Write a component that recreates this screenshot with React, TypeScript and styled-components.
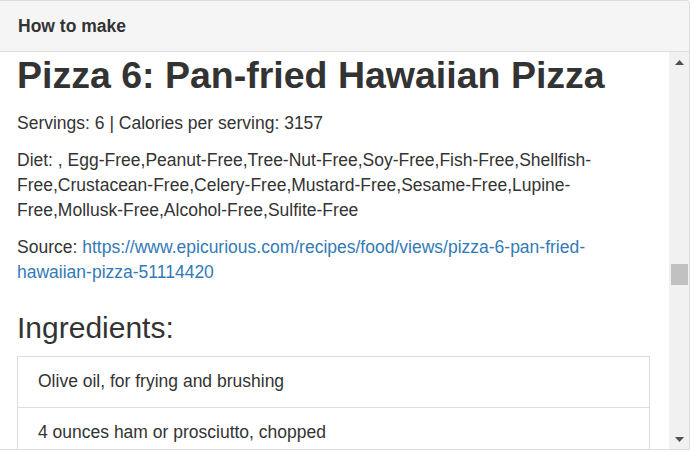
import React from "react";
import styled, { createGlobalStyle } from "styled-components";

const GlobalStyle = createGlobalStyle`
  html, body {
    margin: 0;
    padding: 0;
    background: #ffffff;
  }
  body {
    font-family: "Liberation Sans", Arial, Helvetica, sans-serif;
    color: #333333;
  }
  * { box-sizing: border-box; }
`;

const Panel = styled.section`
  width: 690px;
  height: 450px;
  display: flex;
  flex-direction: column;
  border: 1px solid #dddddd;
  border-left: 0;
  border-top-right-radius: 4px;
  background: #ffffff;
  overflow: hidden;
`;

const PanelHeading = styled.header`
  flex: 0 0 auto;
  height: 51px;
  padding: 0 18px;
  display: flex;
  align-items: center;
  background: #f5f5f5;
  border-bottom: 1px solid #dddddd;
  font-size: 17.5px;
  font-weight: bold;
  color: #333333;
`;

const BodyRow = styled.div`
  flex: 1 1 auto;
  min-height: 0;
  display: flex;
`;

const Content = styled.div`
  flex: 1 1 auto;
  min-width: 0;
  overflow: hidden;
  padding: 3px 19px 0 17px;
`;

const ScrollRail = styled.div`
  flex: 0 0 20px;
  display: flex;
  flex-direction: column;
  background: #f1f1f1;
`;

const ArrowButton = styled.div`
  flex: 0 0 20px;
  display: flex;
  align-items: center;
  justify-content: center;
`;

const Track = styled.div`
  flex: 1 1 auto;
  display: flex;
  flex-direction: column;
`;

const Thumb = styled.div`
  height: 21px;
  margin: 0 1px 0 2px;
  background: #c1c1c1;
`;

const Title = styled.h1`
  margin: 0 0 15px;
  font-size: 37.5px;
  line-height: 1.1;
  font-weight: bold;
  color: #333333;
`;

const Para = styled.p`
  margin: 0 0 12px;
  font-size: 17.5px;
  line-height: 25px;
`;

const Link = styled.a`
  color: #337ab7;
  text-decoration: none;
`;

const SectionTitle = styled.h2`
  margin: 26px 0 12px;
  font-size: 30px;
  line-height: 1.1;
  font-weight: normal;
  color: #333333;
`;

const ListGroup = styled.ul`
  list-style: none;
  margin: 0;
  padding: 0;
`;

const ListItem = styled.li`
  border: 1px solid #dddddd;
  margin-bottom: -1px;
  padding: 12px 20px 13px;
  font-size: 17.5px;
  line-height: 25px;
`;

const ingredients = [
  "Olive oil, for frying and brushing",
  "4 ounces ham or prosciutto, chopped",
];

const diet =
  ", Egg-Free,Peanut-Free,Tree-Nut-Free,Soy-Free,Fish-Free,Shellfish-Free,Crustacean-Free,Celery-Free,Mustard-Free,Sesame-Free,Lupine-Free,Mollusk-Free,Alcohol-Free,Sulfite-Free";

const sourceUrl =
  "https://www.epicurious.com/recipes/food/views/pizza-6-pan-fried-hawaiian-pizza-51114420";

const TRACK_LENGTH = 356;
const THUMB_LENGTH = 21;
const scrollFraction = 0.573;

function UpArrow() {
  return (
    <svg width="9" height="5" viewBox="0 0 9 5" aria-hidden="true">
      <polygon points="4.5,0 9,5 0,5" fill="#505050" />
    </svg>
  );
}

function DownArrow() {
  return (
    <svg width="9" height="5" viewBox="0 0 9 5" aria-hidden="true">
      <polygon points="0,0 9,0 4.5,5" fill="#505050" />
    </svg>
  );
}

export default function App() {
  const thumbOffset = Math.round(scrollFraction * (TRACK_LENGTH - THUMB_LENGTH));

  return (
    <>
      <GlobalStyle />
      <Panel>
        <PanelHeading>How to make</PanelHeading>
        <BodyRow>
          <Content>
            <Title>Pizza 6: Pan-fried Hawaiian Pizza</Title>
            <Para>Servings: 6 | Calories per serving: 3157</Para>
            <Para>Diet: {diet}</Para>
            <Para>
              Source: <Link href={sourceUrl}>{sourceUrl}</Link>
            </Para>
            <SectionTitle>Ingredients:</SectionTitle>
            <ListGroup>
              {ingredients.map((item) => (
                <ListItem key={item}>{item}</ListItem>
              ))}
            </ListGroup>
          </Content>
          <ScrollRail>
            <ArrowButton>
              <UpArrow />
            </ArrowButton>
            <Track>
              <Thumb style={{ marginTop: thumbOffset }} />
            </Track>
            <ArrowButton>
              <DownArrow />
            </ArrowButton>
          </ScrollRail>
        </BodyRow>
      </Panel>
    </>
  );
}
